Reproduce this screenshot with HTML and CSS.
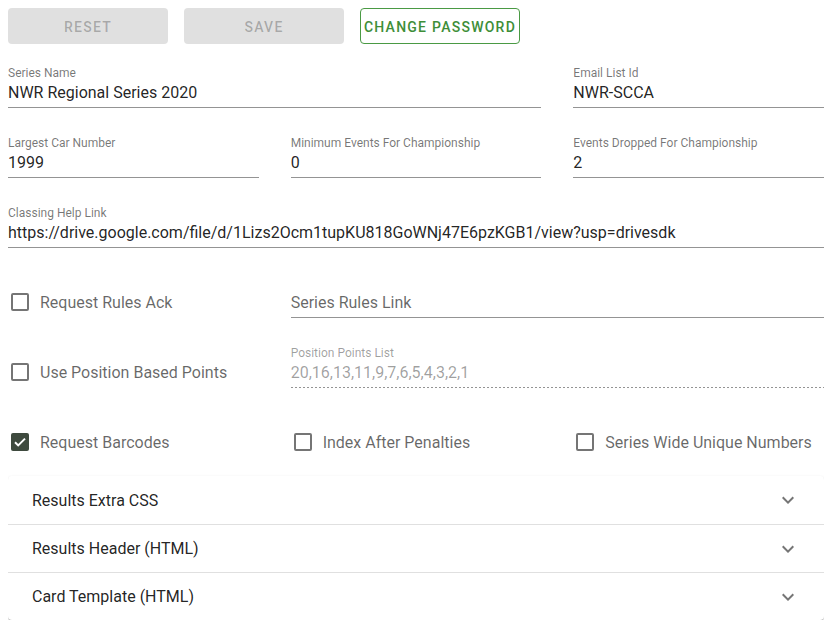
FILE: index.html
```html
<!DOCTYPE html>
<html>
<head>
<meta charset="utf-8">
<link rel="stylesheet" href="styles.css">
</head>
<body>
<div class="actions">
  <button class="btn btn-disabled">Reset</button>
  <button class="btn btn-disabled">Save</button>
  <button class="btn btn-outline">Change Password</button>
</div>

<div class="form">
  <div class="field span2">
    <div class="label">Series Name</div>
    <div class="value">NWR Regional Series 2020</div>
  </div>
  <div class="field">
    <div class="label">Email List Id</div>
    <div class="value">NWR-SCCA</div>
  </div>

  <div class="field">
    <div class="label">Largest Car Number</div>
    <div class="value">1999</div>
  </div>
  <div class="field">
    <div class="label">Minimum Events For Championship</div>
    <div class="value">0</div>
  </div>
  <div class="field">
    <div class="label">Events Dropped For Championship</div>
    <div class="value">2</div>
  </div>

  <div class="field span3">
    <div class="label">Classing Help Link</div>
    <div class="value">https://drive.google.com/file/d/1Lizs2Ocm1tupKU818GoWNj47E6pzKGB1/view?usp=drivesdk</div>
  </div>

  <div class="check">
    <span class="box"></span><span class="check-label">Request Rules Ack</span>
  </div>
  <div class="field span2">
    <div class="label"></div>
    <div class="value placeholder">Series Rules Link</div>
  </div>

  <div class="check">
    <span class="box"></span><span class="check-label">Use Position Based Points</span>
  </div>
  <div class="field span2 disabled">
    <div class="label">Position Points List</div>
    <div class="value">20,16,13,11,9,7,6,5,4,3,2,1</div>
  </div>

  <div class="check">
    <span class="box checked"><svg viewBox="0 0 18 18" width="18" height="18"><path d="M4 9.2l3.2 3.2L14 5.6" fill="none" stroke="#fff" stroke-width="2"/></svg></span><span class="check-label">Request Barcodes</span>
  </div>
  <div class="check">
    <span class="box"></span><span class="check-label">Index After Penalties</span>
  </div>
  <div class="check">
    <span class="box"></span><span class="check-label">Series Wide Unique Numbers</span>
  </div>
</div>

<div class="accordion">
  <div class="acc-item">
    <span class="acc-title">Results Extra CSS</span>
    <svg class="chev" viewBox="0 0 24 24" width="24" height="24"><path d="M16.59 8.59L12 13.17 7.41 8.59 6 10l6 6 6-6z"/></svg>
  </div>
  <div class="acc-item">
    <span class="acc-title">Results Header (HTML)</span>
    <svg class="chev" viewBox="0 0 24 24" width="24" height="24"><path d="M16.59 8.59L12 13.17 7.41 8.59 6 10l6 6 6-6z"/></svg>
  </div>
  <div class="acc-item">
    <span class="acc-title">Card Template (HTML)</span>
    <svg class="chev" viewBox="0 0 24 24" width="24" height="24"><path d="M16.59 8.59L12 13.17 7.41 8.59 6 10l6 6 6-6z"/></svg>
  </div>
</div>
</body>
</html>
```

FILE: styles.css
```css
* { box-sizing: border-box; }

body {
  margin: 8px;
  font-family: Roboto, "Liberation Sans", sans-serif;
  color: rgba(0, 0, 0, 0.87);
  background: #fff;
}

.actions {
  display: flex;
  gap: 16px;
}

.btn {
  width: 160px;
  height: 36px;
  padding: 1px 0 0;
  border-radius: 4px;
  font-family: Roboto, "Liberation Sans", sans-serif;
  font-size: 14px;
  font-weight: 500;
  text-transform: uppercase;
  letter-spacing: 1.25px;
  cursor: pointer;
}

.btn-disabled {
  background: #e0e0e0;
  color: rgba(0, 0, 0, 0.26);
  border: none;
}

.btn-outline {
  background: #fff;
  color: #3e8e38;
  border: 1px solid #4a9a44;
}

.form {
  display: grid;
  grid-template-columns: repeat(3, 1fr);
  column-gap: 32px;
  row-gap: 28px;
  margin-top: 22px;
}

.span2 { grid-column: span 2; }
.span3 { grid-column: span 3; }

.field {
  height: 42px;
}

.label {
  font-size: 12px;
  line-height: 14px;
  height: 14px;
  color: rgba(0, 0, 0, 0.54);
  white-space: nowrap;
}

.value {
  font-size: 16px;
  line-height: 19px;
  padding-top: 3px;
  padding-bottom: 5px;
  border-bottom: 1px solid rgba(0, 0, 0, 0.42);
  white-space: nowrap;
  overflow: hidden;
}

.value.placeholder {
  color: rgba(0, 0, 0, 0.6);
}

.disabled .label,
.disabled .value {
  color: rgba(0, 0, 0, 0.38);
}

.disabled .value {
  border-bottom: none;
  background-image: repeating-linear-gradient(to right, rgba(0, 0, 0, 0.42) 0 2px, transparent 2px 4px);
  background-size: 100% 1px;
  background-repeat: no-repeat;
  background-position: left bottom;
  padding-bottom: 6px;
}

.check {
  padding-top: 14px;
  height: 38px;
  display: flex;
  align-items: center;
}

.box {
  width: 18px;
  height: 18px;
  margin-left: 3px;
  border: 2px solid rgba(0, 0, 0, 0.54);
  border-radius: 2px;
  flex: none;
  display: flex;
}

.box.checked {
  border: none;
  background: #3e4a3e;
}

.check-label {
  margin-left: 11px;
  font-size: 16px;
  color: rgba(0, 0, 0, 0.6);
  white-space: nowrap;
}

.accordion {
  margin-top: 22px;
  background: #fff;
  border-radius: 4px;
  box-shadow: 0 2px 1px -1px rgba(0, 0, 0, 0.2), 0 1px 1px 0 rgba(0, 0, 0, 0.14), 0 1px 3px 0 rgba(0, 0, 0, 0.12);
}

.acc-item {
  height: 48px;
  padding: 0 24px;
  display: flex;
  align-items: center;
  justify-content: space-between;
}

.acc-item + .acc-item {
  border-top: 1px solid rgba(0, 0, 0, 0.12);
}

.acc-title {
  font-size: 16px;
  color: rgba(0, 0, 0, 0.87);
}

.chev {
  fill: rgba(0, 0, 0, 0.54);
}
```
